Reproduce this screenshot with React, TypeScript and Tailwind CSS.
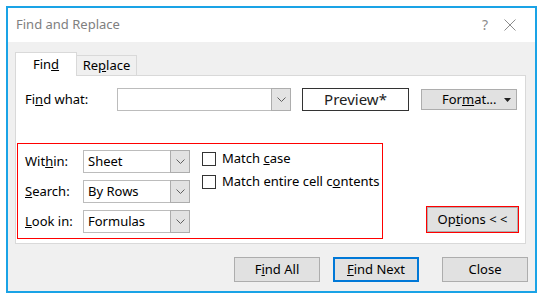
import React from 'react';

const FONT = { fontFamily: '"Noto Sans", "Open Sans", sans-serif' };

function Chevron() {
  return (
    <svg width="9" height="6" viewBox="0 0 9 6" fill="none">
      <path d="M0.5 0.5 L4.5 4.5 L8.5 0.5" stroke="#606060" strokeWidth="1" />
    </svg>
  );
}

function Combo({ value, width }: { value: string; width: string }) {
  return (
    <div className={`flex h-[23px] ${width} border border-[#bcbcbc] bg-white`}>
      <div className="flex-1 flex items-center pl-[4px] text-[13px] text-black">{value}</div>
      <div className="w-[20px] -my-px -mr-px flex items-center justify-center bg-[#e3e3e3] border border-[#adadad]">
        <Chevron />
      </div>
    </div>
  );
}

function Btn({ children, primary, className = '' }: { children: React.ReactNode; primary?: boolean; className?: string }) {
  return (
    <div
      className={`h-[25px] w-[86px] flex items-center justify-center bg-[#e1e1e1] text-[13px] text-black ${
        primary ? 'border-2 border-[#0078d7]' : 'border border-[#adadad]'
      } ${className}`}
    >
      {children}
    </div>
  );
}

export default function App() {
  return (
    <div className="w-[543px] h-[301px] bg-white p-[6px]" style={FONT}>
      <div className="h-[287px] border-2 border-[#1aa3e6] flex flex-col">
        {/* title bar */}
        <div className="h-[34px] bg-white flex items-center pl-[8px] pr-[19px] shrink-0">
          <span className="text-[13px] text-[#808080]">Find and Replace</span>
          <span className="ml-auto text-[14px] text-[#8c8c8c] leading-none">?</span>
          <svg className="ml-[16px]" width="12" height="12" viewBox="0 0 12 12">
            <path d="M0.5 0.5 L11.5 11.5 M11.5 0.5 L0.5 11.5" stroke="#8c8c8c" strokeWidth="1" />
          </svg>
        </div>

        <div className="flex-1 bg-[#f0f0f0] pl-[7px] pr-[8px] pt-[10px]">
          {/* tabs */}
          <div className="h-[23px] flex items-end">
            <div className="relative z-10 -mb-px h-[24px] w-[62px] bg-white border border-b-0 border-[#d9d9d9] flex items-center justify-center text-[13px] text-black">
              <span>
                Fin<u>d</u>
              </span>
            </div>
            <div className="h-[20px] w-[60px] bg-[#f0f0f0] border-t border-r border-[#d9d9d9] flex items-center justify-center text-[13px] text-black">
              <span>
                Re<u>p</u>lace
              </span>
            </div>
          </div>

          {/* panel */}
          <div className="h-[169px] w-[511px] bg-white border border-[#d9d9d9] pt-[12px]">
            <div className="flex items-center ml-[9px]">
              <div className="w-[92px] text-[13px] text-black">
                Fi<u>n</u>d what:
              </div>
              <Combo value="" width="w-[174px]" />
              <div className="ml-[11px] h-[23px] w-[107px] border border-[#333] flex items-center justify-center text-[15px] text-[#222]">
                Preview*
              </div>
              <div className="ml-[12px] h-[21px] w-[96px] bg-[#e1e1e1] border border-[#adadad] flex items-center text-[13px] text-black">
                <span className="ml-[20px]">
                  For<u>m</u>at...
                </span>
                <svg className="ml-auto mr-[5px]" width="7" height="4" viewBox="0 0 7 4">
                  <path d="M0 0 L7 0 L3.5 4 Z" fill="#222" />
                </svg>
              </div>
            </div>

            <div className="flex items-end mt-[32px] ml-px">
              {/* options box */}
              <div className="w-[366px] h-[96px] border border-[#ff0000] pt-[6px] pl-[7px] flex">
                <div className="flex flex-col gap-[7px]">
                  {[
                    { label: <>Wit<u>h</u>in:</>, value: 'Sheet' },
                    { label: <><u>S</u>earch:</>, value: 'By Rows' },
                    { label: <><u>L</u>ook in:</>, value: 'Formulas' },
                  ].map((r, i) => (
                    <div key={i} className="flex items-center">
                      <div className="w-[58px] text-[13px] text-black">{r.label}</div>
                      <Combo value={r.value} width="w-[107px]" />
                    </div>
                  ))}
                </div>
                <div className="ml-[12px] pt-[2px] flex flex-col gap-[9px]">
                  {[
                    <>Match <u>c</u>ase</>,
                    <>Match entire cell c<u>o</u>ntents</>,
                  ].map((t, i) => (
                    <div key={i} className="flex items-center h-[14px]">
                      <div className="w-[14px] h-[14px] border border-[#333] bg-white" />
                      <span className="ml-[6px] text-[13px] text-black">{t}</span>
                    </div>
                  ))}
                </div>
              </div>

              <div className="ml-[43px] mb-[6px] border border-[#ff0000]">
                <div className="h-[25px] w-[91px] bg-[#e1e1e1] border border-[#adadad] flex items-center justify-center text-[13px] text-black">
                  <span>
                    Op<u>t</u>ions &lt; &lt;
                  </span>
                </div>
              </div>
            </div>
          </div>

          {/* bottom buttons */}
          <div className="flex justify-end mt-[13px] -mr-px">
            <Btn>
              <span>
                F<u>i</u>nd All
              </span>
            </Btn>
            <Btn primary className="ml-[13px]">
              <span>
                <u>F</u>ind Next
              </span>
            </Btn>
            <Btn className="ml-[23px]">Close</Btn>
          </div>
        </div>
      </div>
    </div>
  );
}
